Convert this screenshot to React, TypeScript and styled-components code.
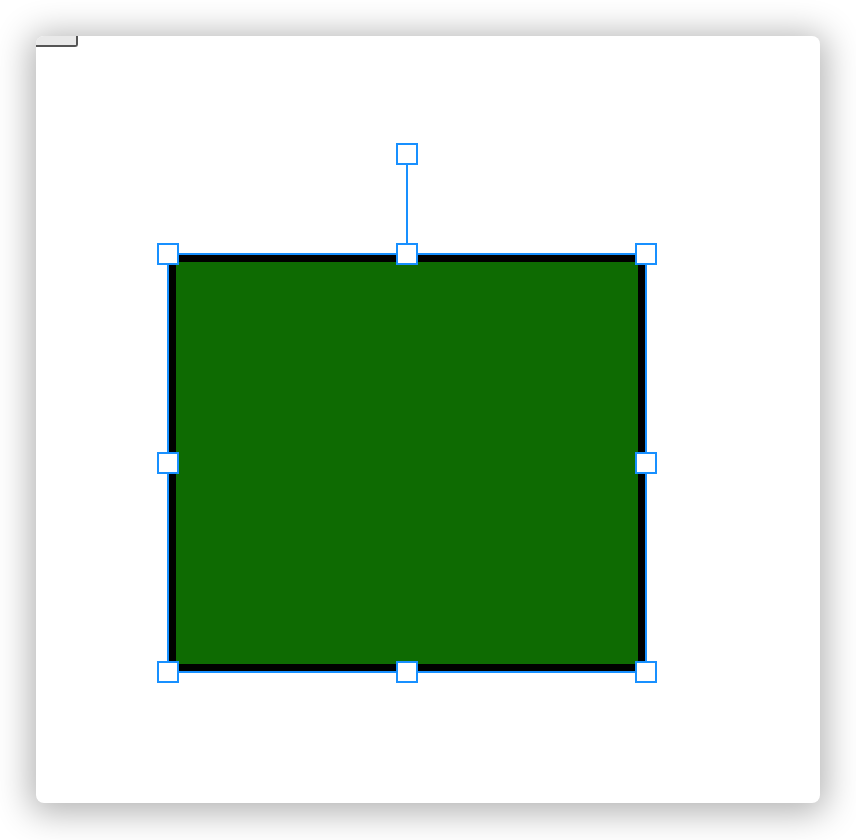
import React from 'react';
import styled, { createGlobalStyle } from 'styled-components';

const GlobalStyle = createGlobalStyle`
  html, body {
    margin: 0;
    padding: 0;
    background: #ffffff;
    font-family: 'Liberation Sans', Arial, sans-serif;
  }
`;

const Page = styled.div`
  padding: 36px;
  width: 856px;
  height: 840px;
  box-sizing: border-box;
`;

const Stage = styled.div`
  position: relative;
  width: 784px;
  height: 767px;
  background: #ffffff;
  border-radius: 8px;
  overflow: hidden;
  box-shadow: 0 4px 34px 6px rgba(0, 0, 0, 0.3);
`;

const ToolTab = styled.div`
  position: absolute;
  left: 0;
  top: -2px;
  width: 42px;
  height: 13px;
  box-sizing: border-box;
  background: #e9e9e9;
  border-right: 2px solid #555555;
  border-bottom: 2px solid #555555;
  border-bottom-right-radius: 3px;
`;

const Shape = styled.div<{ $x: number; $y: number; $w: number; $h: number }>`
  position: absolute;
  left: ${(p) => p.$x}px;
  top: ${(p) => p.$y}px;
  width: ${(p) => p.$w}px;
  height: ${(p) => p.$h}px;
  box-sizing: border-box;
  background: #0e6b02;
  border: 7px solid #000000;
`;

const SelectionBox = styled.div<{ $x: number; $y: number; $w: number; $h: number }>`
  position: absolute;
  left: ${(p) => p.$x - 1}px;
  top: ${(p) => p.$y - 1}px;
  width: ${(p) => p.$w + 2}px;
  height: ${(p) => p.$h + 2}px;
  box-sizing: border-box;
  border: 2px solid #1890ff;
  pointer-events: none;
`;

const RotateStem = styled.div<{ $x: number; $top: number; $bottom: number }>`
  position: absolute;
  left: ${(p) => p.$x - 1}px;
  top: ${(p) => p.$top}px;
  width: 2px;
  height: ${(p) => p.$bottom - p.$top}px;
  background: #1890ff;
`;

const Handle = styled.div<{ $x: number; $y: number }>`
  position: absolute;
  left: ${(p) => p.$x - 11}px;
  top: ${(p) => p.$y - 11}px;
  width: 22px;
  height: 22px;
  box-sizing: border-box;
  background: #ffffff;
  border: 2px solid #1890ff;
`;

const box = { x: 132, y: 218, w: 478, h: 418 };

export default function App() {
  const xs = [box.x, box.x + box.w / 2, box.x + box.w];
  const ys = [box.y, box.y + box.h / 2, box.y + box.h];
  const handles: { x: number; y: number }[] = [];
  ys.forEach((y, r) =>
    xs.forEach((x, c) => {
      if (r === 1 && c === 1) return;
      handles.push({ x, y });
    })
  );
  const rotate = { x: box.x + box.w / 2, y: box.y - 100 };

  return (
    <>
      <GlobalStyle />
      <Page>
        <Stage>
          <ToolTab />
          <Shape $x={box.x + 1} $y={box.y + 1} $w={box.w - 2} $h={box.h - 2} />
          <SelectionBox $x={box.x} $y={box.y} $w={box.w} $h={box.h} />
          <RotateStem $x={rotate.x} $top={rotate.y + 11} $bottom={box.y} />
          <Handle $x={rotate.x} $y={rotate.y} />
          {handles.map((h) => (
            <Handle key={`${h.x}-${h.y}`} $x={h.x} $y={h.y} />
          ))}
        </Stage>
      </Page>
    </>
  );
}
